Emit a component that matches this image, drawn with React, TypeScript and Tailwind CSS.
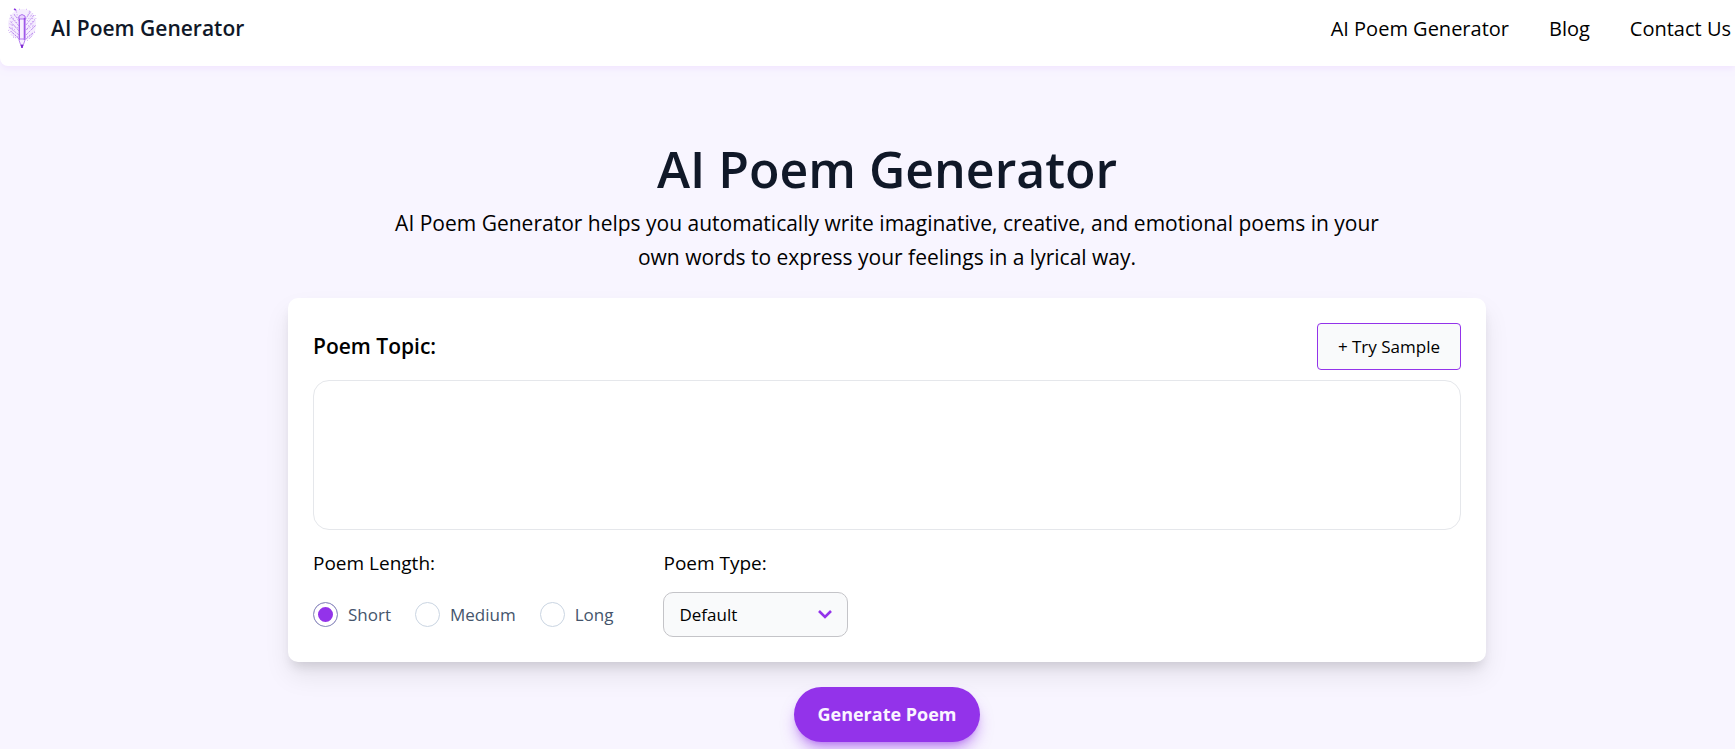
import { useState } from "react";

const navLinks = ["AI Poem Generator", "Blog", "Contact Us"];
const lengths = ["Short", "Medium", "Long"];
const types = ["Default", "Haiku", "Sonnet", "Limerick", "Free Verse"];
const sample = "A quiet morning by the sea";

function Logo() {
  return (
    <svg viewBox="0 0 32 44" className="h-11 w-8" fill="none" aria-hidden="true">
      {/* Soft wash behind the feather */}
      <path d="M8 5q8-4 15 0 7 6 6 15-1 11-9 14l-9-1Q2 29 1 19 1 10 8 5z" fill="#d9b8fa" opacity="0.25" />
      {/* Feather strokes */}
      <g stroke="#a866ec" strokeWidth="1" strokeDasharray="2.6 0.8" opacity="0.6">
        <path d="M12 33 4 25M12 29 2 21M12 25 3 15M12 20 4 11M12 15 7 8" />
        <path d="M19 33 26 27M19 29 28 20M19 24 28 14M19 19 27 9M18 14 24 5" />
      </g>
      <g stroke="#9b51e8" strokeWidth="1" strokeDasharray="1 1.8" opacity="0.5">
        <path d="M11 31 1 24M11 22 1 17M10 17 3 8M11 12 9 4M9 32 5 29M8 24 4 21" />
        <path d="M20 31 29 25M20 23 30 19M21 20 29 12M20 15 26 7M21 9 23 4M20 35 25 30" />
      </g>
      <g stroke="#c294f4" strokeWidth="1" strokeDasharray="1 2.4" opacity="0.8">
        <path d="M9 5l4-2M19 3l5 3M4 9 3 13M28 9l1 4M2 26l5 6M28 26l-5 6M8 9C5 13 4 18 5 24M24 9C26 13 27 18 25 25" />
      </g>
      {/* Pencil */}
      <path d="M12 11h6v23l-1 3-2 5-2-5-1-3z" fill="#f8f0ff" stroke="#b27aef" strokeWidth="0.9" />
      <path d="M12 10q3-3 6 0v3h-6z" fill="#ead6fd" stroke="#a765ec" strokeWidth="0.9" />
      <path d="M17.5 12v22" stroke="#8f3de4" strokeWidth="1.6" opacity="0.8" />
      <path d="M12.5 13v21" stroke="#9440e6" strokeWidth="1" opacity="0.7" />
      <path d="M12 33h6" stroke="#b27aef" strokeWidth="1" />
      <path d="m14 39 1 3 1-3z" fill="#7a22d0" stroke="#7a22d0" strokeWidth="0.8" />
      <path d="m7 3 2 1" stroke="#8e3be3" strokeWidth="1.4" />
    </svg>
  );
}

export default function App() {
  const [topic, setTopic] = useState("");
  const [length, setLength] = useState("Short");

  return (
    <div className="min-h-screen bg-[#f8f5ff] font-['Open_Sans','Noto_Sans',sans-serif] text-black">
      {/* Header */}
      <header className="flex h-[66px] items-start justify-between rounded-bl-lg bg-white pt-1 pr-1 pl-[7px] shadow-md shadow-purple-100">
        <a href="#" className="flex items-center gap-3 text-[21px] leading-[48px] font-semibold text-gray-900">
          <Logo />
          AI Poem Generator
        </a>
        <nav className="flex gap-10 text-[20px] leading-[50px]">
          {navLinks.map((link) => (
            <a key={link} href="#" className="hover:text-[#9333ea]">
              {link}
            </a>
          ))}
        </nav>
      </header>

      <main className="pt-[71px] pl-[39px]">
        <div className="mx-auto flex max-w-[1198px] flex-col items-center">
          <h1 className="text-center text-[50px] leading-[64px] font-semibold text-gray-900">
            AI Poem Generator
          </h1>
          <p className="mt-[5px] max-w-[1020px] text-center text-[21px] leading-[34px]">
            AI Poem Generator helps you automatically write imaginative, creative, and emotional poems in your own words
            to express your feelings in a lyrical way.
          </p>

          {/* Form card */}
          <form className="mt-6 w-full rounded-[10px] bg-white p-[25px] shadow-[0_14px_26px_rgba(0,0,0,0.08),0_8px_12px_-4px_rgba(0,0,0,0.12)]">
            <div className="flex items-center justify-between">
              <label htmlFor="topic" className="text-[21px] font-semibold">
                Poem Topic:
              </label>
              <button
                type="button"
                onClick={() => setTopic(sample)}
                className="h-[47px] rounded border border-[#9333ea] bg-gray-50 px-5 text-[17px]"
              >
                + Try Sample
              </button>
            </div>
            <textarea
              id="topic"
              value={topic}
              onChange={(e) => setTopic(e.target.value)}
              className="mt-[10px] block h-[150px] w-full resize-none rounded-2xl border border-gray-200 p-4 text-[17px] outline-none"
            />

            <div className="mt-[19px] flex gap-[50px]">
              <fieldset>
                <legend className="text-[19px] leading-7">Poem Length:</legend>
                <div className="mt-[15px] flex h-[45px] items-center gap-6">
                  {lengths.map((item) => (
                    <label key={item} className="flex items-center gap-[10px] text-[17px] text-slate-600">
                      <input
                        type="radio"
                        name="length"
                        checked={length === item}
                        onChange={() => setLength(item)}
                        className="size-[25px] appearance-none rounded-full border border-slate-300 checked:border-slate-400 checked:bg-[#9333ea] checked:shadow-[inset_0_0_0_4px_white]"
                      />
                      {item}
                    </label>
                  ))}
                </div>
              </fieldset>

              <div>
                <label htmlFor="type" className="block text-[19px] leading-7">
                  Poem Type:
                </label>
                <div className="relative mt-[15px]">
                  <select
                    id="type"
                    className="h-[45px] w-[185px] appearance-none rounded-[10px] border border-[#c4c4c8] bg-gray-50 px-[15px] text-[17px] outline-none"
                  >
                    {types.map((type) => (
                      <option key={type}>{type}</option>
                    ))}
                  </select>
                  <svg
                    viewBox="0 0 14 10"
                    className="pointer-events-none absolute top-[17px] right-4 h-[10px] w-[14px]"
                    fill="none"
                    stroke="#9333ea"
                    strokeWidth="2.6"
                  >
                    <path d="m1 2 6 6 6-6" />
                  </svg>
                </div>
              </div>
            </div>
          </form>

          <button
            type="button"
            className="mt-[25px] h-[55px] rounded-full bg-[#9333ea] px-[23px] text-[18px] font-bold text-purple-50 shadow-lg shadow-[#9333ea]/50"
          >
            Generate Poem
          </button>
        </div>
      </main>
    </div>
  );
}
